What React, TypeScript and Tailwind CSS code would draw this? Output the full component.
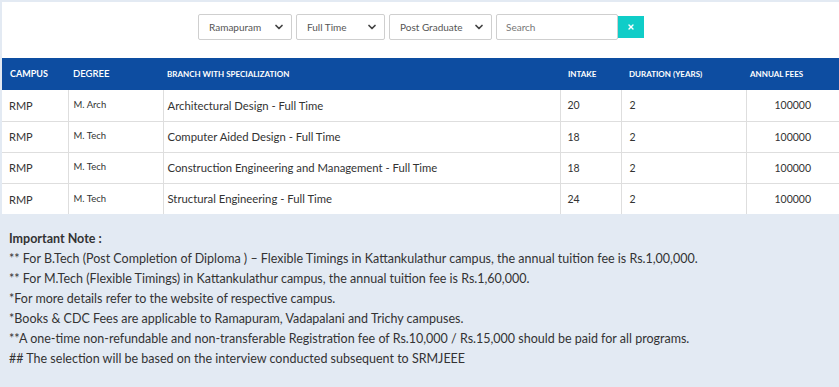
import { ChevronDown, X } from 'lucide-react';

const rows = [
  { campus: 'RMP', degree: 'M. Arch', branch: 'Architectural Design - Full Time', intake: '20', duration: '2', fees: '100000' },
  { campus: 'RMP', degree: 'M. Tech', branch: 'Computer Aided Design - Full Time', intake: '18', duration: '2', fees: '100000' },
  { campus: 'RMP', degree: 'M. Tech', branch: 'Construction Engineering and Management - Full Time', intake: '18', duration: '2', fees: '100000' },
  { campus: 'RMP', degree: 'M. Tech', branch: 'Structural Engineering - Full Time', intake: '24', duration: '2', fees: '100000' },
];

const notes = [
  '** For B.Tech (Post Completion of Diploma ) – Flexible Timings in Kattankulathur campus, the annual tuition fee is Rs.1,00,000.',
  '** For M.Tech (Flexible Timings) in Kattankulathur campus, the annual tuition fee is Rs.1,60,000.',
  '*For more details refer to the website of respective campus.',
  '*Books & CDC Fees are applicable to Ramapuram, Vadapalani and Trichy campuses.',
  '**A one-time non-refundable and non-transferable Registration fee of Rs.10,000 / Rs.15,000 should be paid for all programs.',
  '## The selection will be based on the interview conducted subsequent to SRMJEEE',
];

function Select({ label, width }: { label: string; width: string }) {
  return (
    <div className={`${width} h-[26px] flex items-center justify-between border border-[#cfcfcf] rounded-[2px] bg-white pl-[10px] pr-[6px]`}>
      <span className="text-[10px] text-[#555]">{label}</span>
      <ChevronDown size={12} strokeWidth={3.5} className="text-[#444]" />
    </div>
  );
}

export default function App() {
  return (
    <div className="w-[839px] h-[387px] bg-[#e3eaf3] pt-[2px] text-[#333] font-['Lato',sans-serif] overflow-hidden">
      <div className="ml-[2px] bg-white">
        <div className="h-[56px] flex items-start justify-center pt-[12px] gap-[4px] pl-[1px]">
          <Select label="Ramapuram" width="w-[94px]" />
          <Select label="Full Time" width="w-[89px]" />
          <Select label="Post Graduate" width="w-[103px]" />
          <div className="h-[26px] flex items-center">
            <div className="w-[122px] h-[26px] border border-[#cfcfcf] rounded-[2px] flex items-center pl-[9px] text-[10px] text-[#777]">Search</div>
            <button className="w-[26px] h-[22px] bg-[#10cdc8] flex items-center justify-center">
              <X size={8} strokeWidth={4} className="text-white" />
            </button>
          </div>
        </div>
        <table className="w-full border-collapse text-left">
          <thead>
            <tr className="bg-[#0d4da1] text-white h-[32px]">
              <th className="w-[66px] pl-[8px] text-[9px] font-bold">CAMPUS</th>
              <th className="w-[95px] pl-[5px] text-[9.5px] font-semibold">DEGREE</th>
              <th className="w-[397px] pl-[4px] text-[8px] font-bold">BRANCH WITH SPECIALIZATION</th>
              <th className="w-[61px] pl-[8px] text-[8px] font-bold">INTAKE</th>
              <th className="w-[125px] pl-[8px] text-[8px] font-bold">DURATION (YEARS)</th>
              <th className="pl-[4px] text-[8px] font-bold">ANNUAL FEES</th>
            </tr>
          </thead>
          <tbody>
            {rows.map((r, i) => (
              <tr key={i} className="h-[31px] border-b border-[#dedede] last:border-b-0">
                <td className="pl-[7px] pt-[2px] text-[11px]">{r.campus}</td>
                <td className="pl-[5px] text-[9.5px] border-l border-[#dedede]">{r.degree}</td>
                <td className="pl-[4px] pt-[2px] text-[11.3px] border-l border-[#dedede]">{r.branch}</td>
                <td className="pl-[7px] pt-[2px] text-[10.5px] border-l border-[#dedede]">{r.intake}</td>
                <td className="pl-[8px] pt-[2px] text-[10.5px] border-l border-[#dedede]">{r.duration}</td>
                <td className="text-center pt-[2px] text-[10.5px] border-l border-[#dedede]">{r.fees}</td>
              </tr>
            ))}
          </tbody>
        </table>
      </div>
      <div className="pt-[15px] pl-[9px] text-[12.5px] leading-[20px]">
        <div className="font-bold">Important Note :</div>
        {notes.map((n, i) => (
          <div key={i}>{n}</div>
        ))}
      </div>
    </div>
  );
}
